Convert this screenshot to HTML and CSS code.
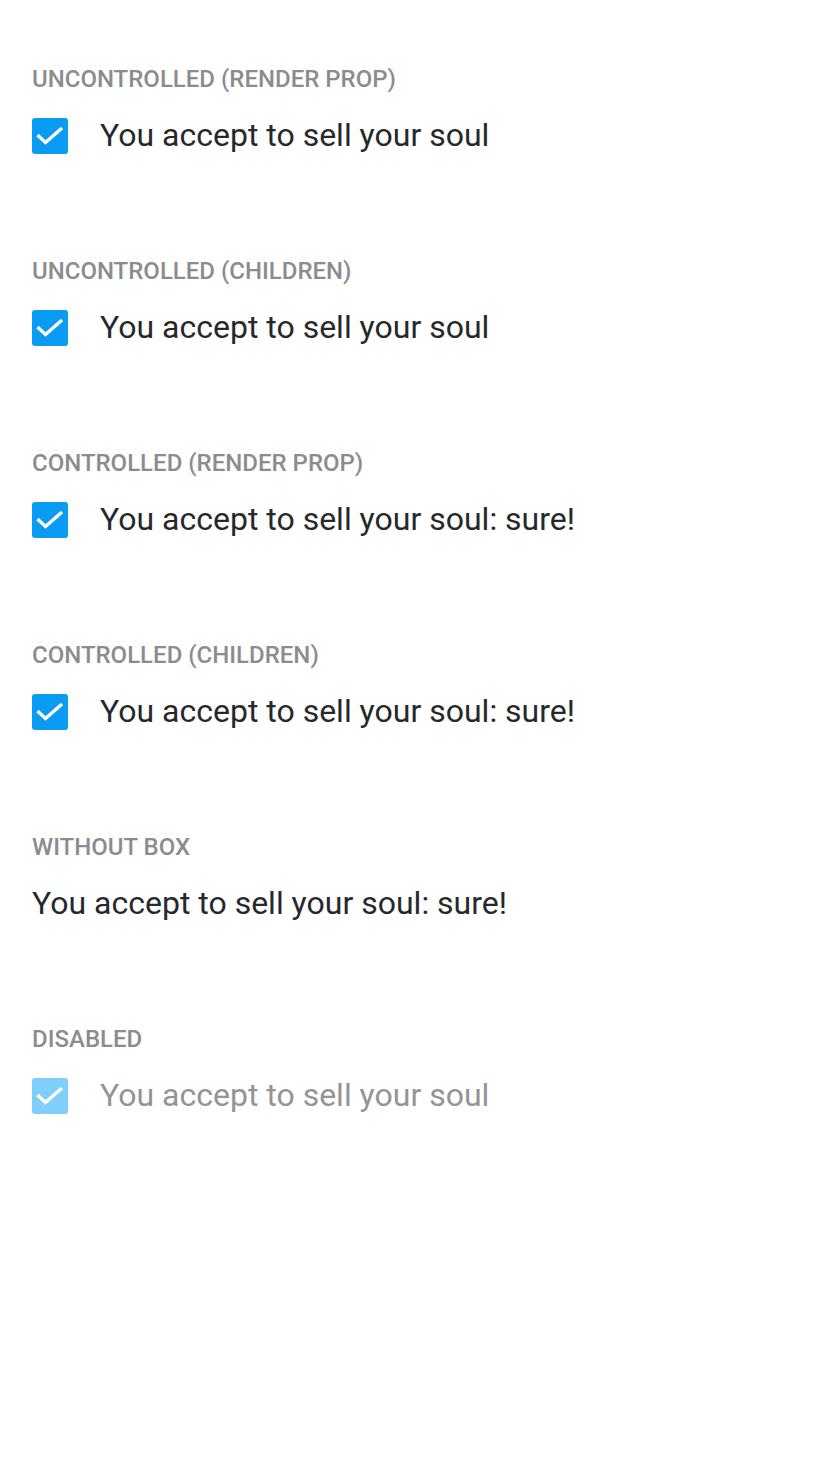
FILE: index.html
```html
<!DOCTYPE html>
<html>
<head>
<meta charset="utf-8">
<link rel="stylesheet" href="styles.css">
</head>
<body>
<main class="page">
  <section class="demo">
    <h2 class="demo-title">Uncontrolled (render prop)</h2>
    <label class="check">
      <span class="box"><svg viewBox="0 0 36 36"><path d="M5.5 17 L13.5 24.5 L30 10" /></svg></span>
      <span class="check-text">You accept to sell your soul</span>
    </label>
  </section>
  <section class="demo">
    <h2 class="demo-title">Uncontrolled (children)</h2>
    <label class="check">
      <span class="box"><svg viewBox="0 0 36 36"><path d="M5.5 17 L13.5 24.5 L30 10" /></svg></span>
      <span class="check-text">You accept to sell your soul</span>
    </label>
  </section>
  <section class="demo">
    <h2 class="demo-title">Controlled (render prop)</h2>
    <label class="check">
      <span class="box"><svg viewBox="0 0 36 36"><path d="M5.5 17 L13.5 24.5 L30 10" /></svg></span>
      <span class="check-text">You accept to sell your soul: sure!</span>
    </label>
  </section>
  <section class="demo">
    <h2 class="demo-title">Controlled (children)</h2>
    <label class="check">
      <span class="box"><svg viewBox="0 0 36 36"><path d="M5.5 17 L13.5 24.5 L30 10" /></svg></span>
      <span class="check-text">You accept to sell your soul: sure!</span>
    </label>
  </section>
  <section class="demo">
    <h2 class="demo-title">Without box</h2>
    <label class="check no-box">
      <span class="check-text">You accept to sell your soul: sure!</span>
    </label>
  </section>
  <section class="demo">
    <h2 class="demo-title">Disabled</h2>
    <label class="check disabled">
      <span class="box"><svg viewBox="0 0 36 36"><path d="M5.5 17 L13.5 24.5 L30 10" /></svg></span>
      <span class="check-text">You accept to sell your soul</span>
    </label>
  </section>
</main>
</body>
</html>
```

FILE: styles.css
```css
* { box-sizing: border-box; }
html, body { margin: 0; padding: 0; background: #fff; }
body {
  font-family: Roboto, "Noto Sans", sans-serif;
  color: #27282c;
}
.page {
  padding: 65px 32px 0 32px;
  display: flex;
  flex-direction: column;
}
.demo {
  height: 192px;
  display: flex;
  flex-direction: column;
}
.demo-title {
  margin: 0 0 25px 0;
  font-size: 24px;
  line-height: 28px;
  font-weight: 500;
  text-transform: uppercase;
  color: #8c8c90;
}
.check {
  display: flex;
  align-items: flex-start;
  gap: 32px;
  height: 36px;
}
.box {
  width: 36px;
  height: 36px;
  border-radius: 3px;
  background: #0a9bf2;
  display: flex;
  flex: none;
}
.box svg {
  width: 36px;
  height: 36px;
  fill: none;
  stroke: #fff;
  stroke-width: 3.4;
  stroke-linecap: butt;
  stroke-linejoin: miter;
}
.check-text {
  font-size: 32px;
  line-height: 34px;
}
.disabled .box { background: #80cffa; }
.disabled .check-text { color: #949496; }
```
